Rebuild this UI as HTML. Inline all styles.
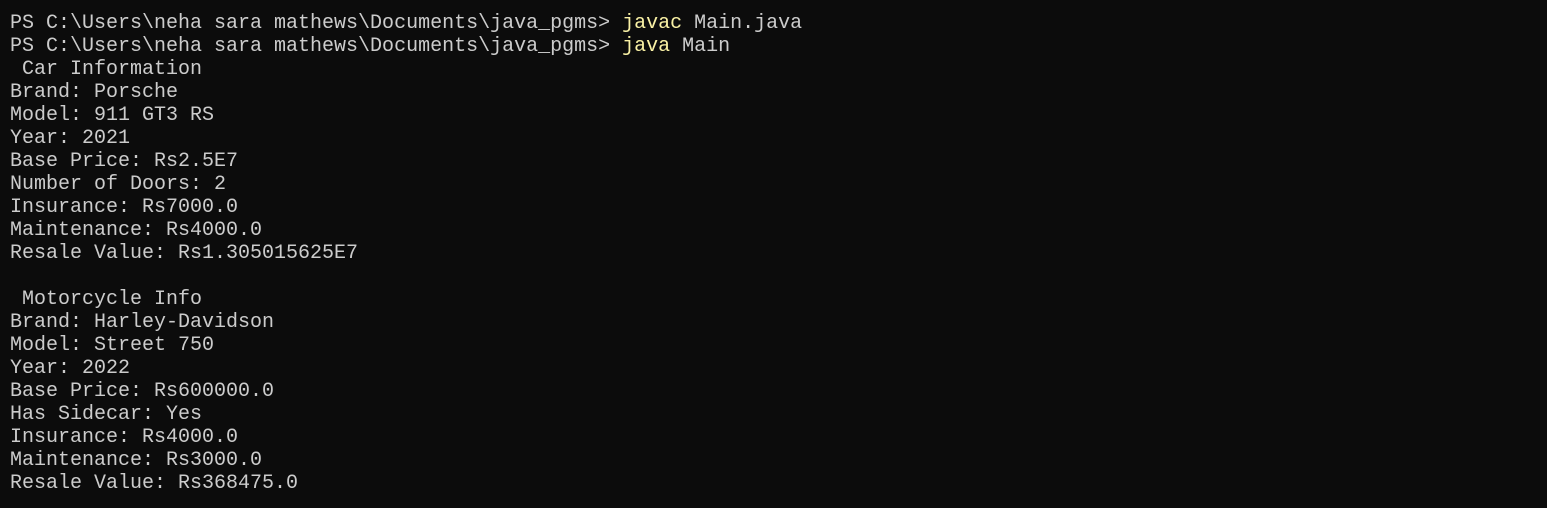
<!DOCTYPE html>
<html><head><style>
html,body{margin:0;padding:0;background:#0c0c0c;width:1547px;height:508px;overflow:hidden}
pre{margin:0;padding:12px 0 0 10px;font-family:"Liberation Mono","DejaVu Sans Mono",monospace;font-size:20px;line-height:23px;color:#cccccc}
.y{color:#f9f1a5}
</style></head><body><pre>PS C:\Users\neha sara mathews\Documents\java_pgms&gt; <span class="y">javac</span> Main.java
PS C:\Users\neha sara mathews\Documents\java_pgms&gt; <span class="y">java</span> Main
 Car Information
Brand: Porsche
Model: 911 GT3 RS
Year: 2021
Base Price: Rs2.5E7
Number of Doors: 2
Insurance: Rs7000.0
Maintenance: Rs4000.0
Resale Value: Rs1.305015625E7

 Motorcycle Info
Brand: Harley-Davidson
Model: Street 750
Year: 2022
Base Price: Rs600000.0
Has Sidecar: Yes
Insurance: Rs4000.0
Maintenance: Rs3000.0
Resale Value: Rs368475.0</pre></body></html>
